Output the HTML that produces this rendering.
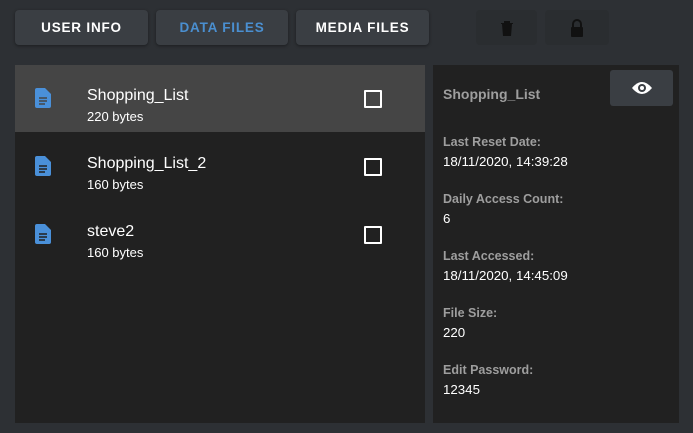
<!DOCTYPE html>
<html><head><style>
body{margin:0;width:693px;height:433px;background:#2d3034;font-family:"Liberation Sans",sans-serif;position:relative;overflow:hidden}
.b{position:absolute;top:10px;height:35px;background:#3a3e43;border-radius:4px;color:#fff;font-size:13.5px;font-weight:bold;letter-spacing:0.8px;text-align:center;line-height:36px;box-shadow:0 1px 3px rgba(0,0,0,.4)}
.d{background:#2a2d30;box-shadow:none}
.p{position:absolute;top:65px;bottom:10px;background:#212121}
.row{position:absolute;left:0;width:410px;height:67px}
.row .n{position:absolute;left:72px;top:22px;color:#fff;font-size:16px}
.row .s{position:absolute;left:72px;top:44px;color:#fff;font-size:13px}
.row svg.f{position:absolute;left:20px;top:23px}
.row .c{position:absolute;left:349px;top:25px;width:14px;height:14px;border:2px solid #fff;border-radius:1px}
.l{position:absolute;left:10px;color:#9e9e9e;font-weight:bold;font-size:12.5px}
.v{position:absolute;left:10px;color:#fff;font-size:13.3px}
</style></head><body>
<div class="b" style="left:15px;width:133px">USER INFO</div>
<div class="b" style="left:156px;width:132px;color:#4a8fd0">DATA FILES</div>
<div class="b" style="left:296px;width:133px">MEDIA FILES</div>
<div class="b d" style="left:476px;width:61px"><svg width="14" height="18" viewBox="0 0 14 18" style="margin-top:9px"><path d="M1 4h12v1H1zM4 2h6v2H4zM2 5h10l-1 12H3z" fill="#111"/></svg></div>
<div class="b d" style="left:545px;width:64px"><svg width="14" height="20" viewBox="0 0 14 20" style="margin-top:8px"><path d="M3 9V6a4 4 0 0 1 8 0v3" stroke="#111" stroke-width="2" fill="none"/><rect x="1" y="9" width="12" height="10" rx="1" fill="#111"/></svg></div>
<div class="p" style="left:15px;width:410px">
 <div class="row" style="top:0;background:#454545"><svg class="f" width="16" height="20" viewBox="0 0 16 20"><path d="M0 2a2 2 0 0 1 2-2h8l6 6v12a2 2 0 0 1-2 2H2a2 2 0 0 1-2-2z" fill="#4a90d9"/><path d="M4 10h8M4 13h8M4 16h6" stroke="#454545" stroke-width="1.5"/></svg><div class="n">Shopping_List</div><div class="s">220 bytes</div><div class="c"></div></div>
 <div class="row" style="top:68px"><svg class="f" width="16" height="20" viewBox="0 0 16 20"><path d="M0 2a2 2 0 0 1 2-2h8l6 6v12a2 2 0 0 1-2 2H2a2 2 0 0 1-2-2z" fill="#4a90d9"/><path d="M4 10h8M4 13h8M4 16h6" stroke="#212121" stroke-width="1.5"/></svg><div class="n">Shopping_List_2</div><div class="s">160 bytes</div><div class="c"></div></div>
 <div class="row" style="top:136px"><svg class="f" width="16" height="20" viewBox="0 0 16 20"><path d="M0 2a2 2 0 0 1 2-2h8l6 6v12a2 2 0 0 1-2 2H2a2 2 0 0 1-2-2z" fill="#4a90d9"/><path d="M4 10h8M4 13h8M4 16h6" stroke="#212121" stroke-width="1.5"/></svg><div class="n">steve2</div><div class="s">160 bytes</div><div class="c"></div></div>
</div>
<div class="p" style="left:433px;width:246px">
 <div class="l" style="top:21px;font-size:14px">Shopping_List</div>
 <div style="position:absolute;left:177px;top:5px;width:63px;height:36px;background:#3a3e43;border-radius:3px;text-align:center"><svg width="22" height="16" viewBox="0 0 22 16" style="margin-top:10px"><path d="M1 8Q11-4 21 8Q11 20 1 8z" fill="#fff"/><circle cx="11" cy="8" r="4" fill="#3a3e43"/><circle cx="11" cy="8" r="2" fill="#fff"/></svg></div>
 <div class="l" style="top:70px">Last Reset Date:</div><div class="v" style="top:89px">18/11/2020, 14:39:28</div>
 <div class="l" style="top:127px">Daily Access Count:</div><div class="v" style="top:146px">6</div>
 <div class="l" style="top:184px">Last Accessed:</div><div class="v" style="top:203px">18/11/2020, 14:45:09</div>
 <div class="l" style="top:241px">File Size:</div><div class="v" style="top:260px">220</div>
 <div class="l" style="top:298px">Edit Password:</div><div class="v" style="top:317px">12345</div>
</div>
</body></html>
